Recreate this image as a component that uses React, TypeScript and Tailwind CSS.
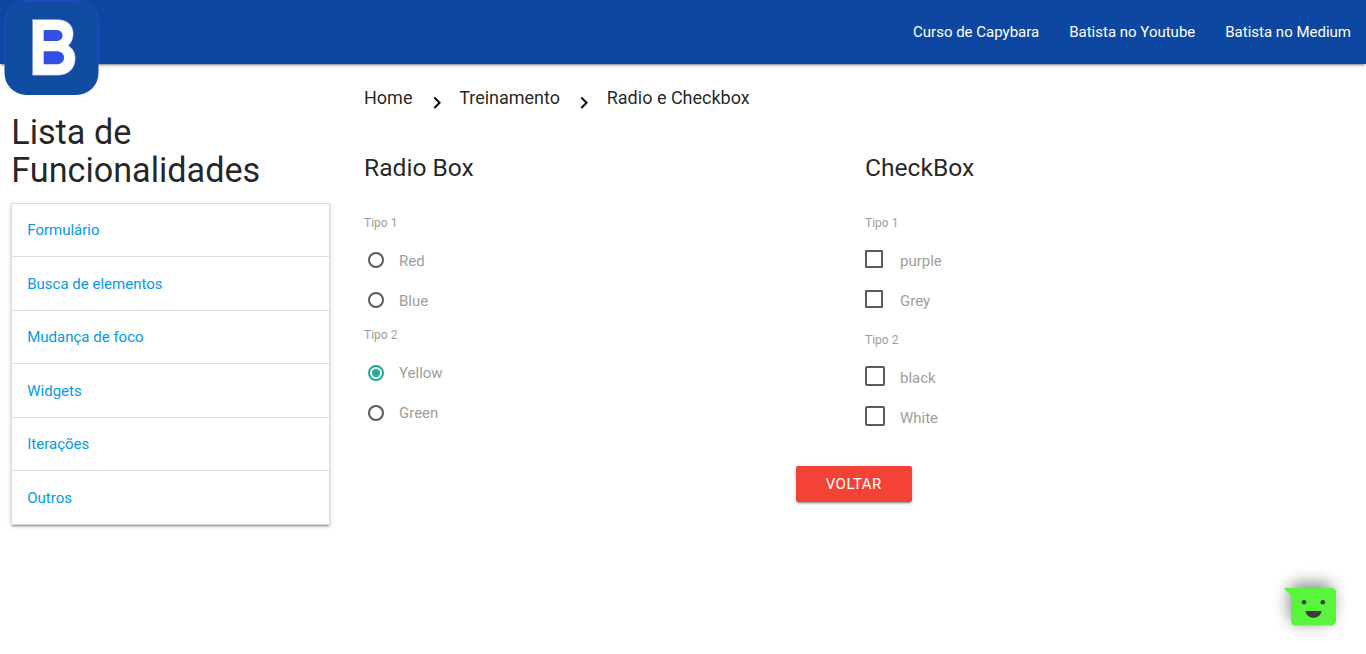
import React from "react";

const navLinks = ["Curso de Capybara", "Batista no Youtube", "Batista no Medium"];
const menu = ["Formulário", "Busca de elementos", "Mudança de foco", "Widgets", "Iterações", "Outros"];

function Logo() {
  return (
    <svg width="96" height="96" viewBox="0 0 96 96" className="absolute left-[4px] top-0" aria-hidden="true">
      <rect x="0.5" y="0.5" width="94" height="94.5" rx="22" fill="#114ca3" />
      <path d="M0.5 64V22.5a22 22 0 0 1 22-22h50a22 22 0 0 1 22 22V64" fill="none" stroke="#2448c4" strokeWidth="1" />
      <path d="M28.500 19.500H53C63.500 19.500 69.300 25.500 69.300 33.500C69.300 38.500 67.500 43 64.300 45.700C68.700 48 71.300 52.500 71.300 58.500C71.300 69 64 75.300 53.500 75.300H28.500Z" fill="#fff" stroke="#7f8df0" strokeWidth="0.5" />
      <path d="M39.700 30H51.500C56 30 58.500 32 58.500 35.500S56 41 51.500 41H39.700Z" fill="#3350e5" />
      <path d="M39.700 51.200H52.500C57 51.200 60 53.700 60 57.700S57 64.200 52.500 64.200H39.700Z" fill="#3350e5" />
    </svg>
  );
}

function Chevron() {
  return (
    <svg width="24" height="24" viewBox="0 0 24 24" className="mt-[12px] shrink-0" aria-hidden="true">
      <path d="M8.590 16.340l4.580-4.590-4.580-4.590L10 5.750l6 6-6 6z" fill="#000c14" />
    </svg>
  );
}

function Radio({ label, checked = false, low = false }: { label: string; checked?: boolean; low?: boolean }) {
  return (
    <div className="flex h-[40px] items-start pl-[4px]">
      <svg width="16" height="16" viewBox="0 0 16 16" className="mt-[4px]" aria-hidden="true">
        <circle cx="8" cy="8" r="7" fill="none" stroke={checked ? "#26a69a" : "#5a5a5a"} strokeWidth="2" />
        {checked && <circle cx="8" cy="8" r="4.200" fill="#26a69a" />}
        {checked && <circle cx="8" cy="8" r="2.900" fill="none" stroke="#fff" strokeWidth="0.700" opacity="0.200" />}
      </svg>
      <span className={low ? "ml-[15px] pt-px text-[15px] leading-[25px] text-[#9e9e9e]" : "ml-[15px] text-[15px] leading-[25px] text-[#9e9e9e]"}>
        {label}
      </span>
    </div>
  );
}

function Check({ label, filled = false }: { label: string; filled?: boolean }) {
  return (
    <div className="flex h-[40px] items-start">
      <span className="flex w-[35px] shrink-0">
        <span
          className={
            filled
              ? "mt-[1px] size-[20px] rounded-[2px] border-2 border-[#5a5a5a]"
              : "mt-[2px] size-[18px] rounded-[1px] border-2 border-[#5a5a5a]"
          }
        />
      </span>
      <span className="pt-px text-[15px] leading-[25px] text-[#9e9e9e]">{label}</span>
    </div>
  );
}

function Legend({ children }: { children: React.ReactNode }) {
  return <div className="text-[12px] leading-[18px] text-[#9e9e9e]">{children}</div>;
}

function Smiley() {
  return (
    <div className="absolute bottom-[14px] right-[16px]">
      <svg width="80" height="80" viewBox="1270 560 80 80" className="overflow-visible" aria-hidden="true">
        <defs>
          <filter id="glow" x="-70%" y="-70%" width="240%" height="240%">
            <feGaussianBlur stdDeviation="8" />
          </filter>
        </defs>
        <rect x="1289" y="583" width="44" height="40" rx="10" fill="#000" opacity="0.450" filter="url(#glow)" />
        <path d="M1284 588h47.500a4.500 4.500 0 0 1 4.500 4.500v28.500a4.500 4.500 0 0 1-4.500 4.500h-36a4.500 4.500 0 0 1-4.500-4.500V596z" fill="#58f53c" />
        <circle cx="1304" cy="602.300" r="2.300" fill="#3d3d3d" />
        <circle cx="1322.800" cy="602.300" r="2.300" fill="#3d3d3d" />
        <path d="M1305.500 611h16c-.5 4-4 6.800-8 6.800s-7.500-2.800-8-6.800z" fill="#3d3d3d" />
      </svg>
    </div>
  );
}

export default function App() {
  return (
    <div className="relative h-[654px] overflow-hidden bg-white font-[Roboto,sans-serif] text-[15px] leading-[1.5] text-[rgba(0,0,0,0.87)]">
      <nav className="relative h-[64px] bg-[#0d47a1] shadow-[0_2px_2px_0_rgba(0,0,0,0.14),0_1px_5px_0_rgba(0,0,0,0.12),0_3px_1px_-2px_rgba(0,0,0,0.2)]">
        <Logo />
        <ul className="flex h-full justify-end leading-[64px] text-white">
          {navLinks.map((t) => (
            <li key={t} className="px-[15px]">{t}</li>
          ))}
        </ul>
      </nav>
      <div className="flex">
        <aside className="w-[341.5px] shrink-0 px-[11.25px] pt-[50px]">
          <h4 className="text-[34.2px] leading-[37.62px]">Lista de Funcionalidades</h4>
          <ul className="mt-[13.700px] border-x border-t border-[#ddd] shadow-[0_2px_2px_0_rgba(0,0,0,0.14),0_1px_5px_0_rgba(0,0,0,0.12),0_3px_1px_-2px_rgba(0,0,0,0.2)]">
            {menu.map((t) => (
              <li key={t} className="border-b border-[#ddd] p-[15px] leading-[22.5px] text-[#039be5] even:pt-[15.5px] even:pb-[14.5px]">{t}</li>
            ))}
          </ul>
        </aside>
        <main className="grow pl-[22.500px] pr-[11.250px]">
          <div className="flex h-[66px] items-center text-[18px]">
            <span>Home</span>
            <span className="flex w-[46.700px] justify-center pl-[2px]"><Chevron /></span>
            <span>Treinamento</span>
            <span className="flex w-[46.700px] justify-center pl-[2px]"><Chevron /></span>
            <span>Radio e Checkbox</span>
          </div>
          <div className="flex pt-[24px]">
            <section className="w-[501px] shrink-0">
              <h5 className="text-[24.6px] leading-[27px]">Radio Box</h5>
              <div className="h-[33px]" />
              <Legend>Tipo 1</Legend>
              <div className="h-[16px]" />
              <Radio label="Red" low />
              <Radio label="Blue" low />
              <div className="-mt-[2px]">
                <Legend>Tipo 2</Legend>
              </div>
              <div className="h-[17px]" />
              <Radio label="Yellow" checked />
              <Radio label="Green" />
            </section>
            <section className="grow">
              <h5 className="text-[24.6px] leading-[27px]">CheckBox</h5>
              <div className="h-[33px]" />
              <Legend>Tipo 1</Legend>
              <div className="h-[16px]" />
              <Check label="purple" />
              <Check label="Grey" />
              <div className="mt-[3px]">
                <Legend>Tipo 2</Legend>
              </div>
              <div className="h-[16px]" />
              <Check label="black" filled />
              <Check label="White" filled />
            </section>
          </div>
          <div className="mt-[21px] flex justify-center pr-[11.250px]">
            <button className="h-[36px] w-[116px] rounded-[2px] bg-[#f44336] text-[15px] leading-[36px] tracking-[0.5px] text-white shadow-[0_2px_2px_0_rgba(0,0,0,0.14),0_1px_5px_0_rgba(0,0,0,0.12),0_3px_1px_-2px_rgba(0,0,0,0.2)]">
              VOLTAR
            </button>
          </div>
        </main>
      </div>
      <Smiley />
    </div>
  );
}
